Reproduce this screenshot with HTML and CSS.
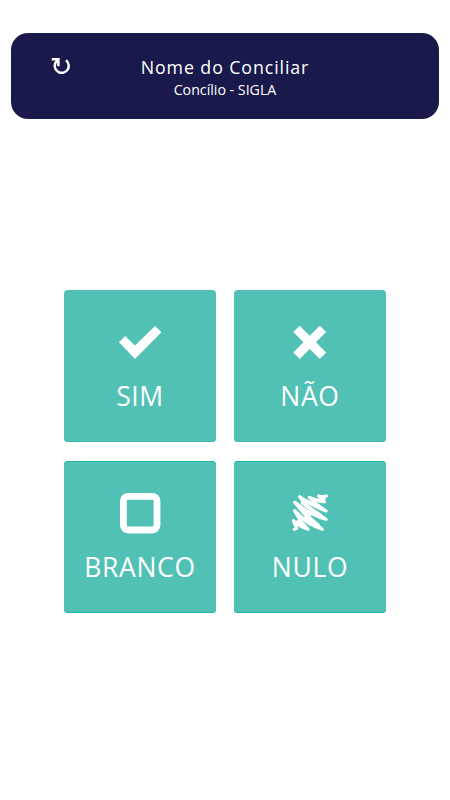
FILE: index.html
```html
<!DOCTYPE html>
<html lang="pt-BR">
<head>
<meta charset="utf-8">
<title>Votação</title>
<link rel="stylesheet" href="styles.css">
</head>
<body>
<header class="header">
  <svg class="reload" viewBox="0 0 20 20"><path d="M.8 2.2H7.4V9.2M15 3.3A7 7 0 1 1 4.2 6.3Q5.2 3.8 7.4 2.8"/></svg>
  <div class="person">
    <h1 class="name">Nome do Conciliar</h1>
    <p class="council">Concílio - SIGLA</p>
  </div>
</header>
<main class="votes">
  <button class="vote">
    <svg class="icon" viewBox="0 0 44 44"><path d="M1 22.3 7.2 16 17 25.6 37 6 43.4 12.3 17 39Z"/></svg>
    <span class="label">SIM</span>
  </button>
  <button class="vote">
    <svg class="icon" viewBox="0 0 44 44"><path d="M5.3 12 11.7 5.7 21.7 15.8 31.8 5.7 38.2 12 28 22.3 38.2 32.6 31.8 39 21.7 28.9 11.7 39 5.3 32.6 15.4 22.3Z"/></svg>
    <span class="label">NÃO</span>
  </button>
  <button class="vote vote-lower">
    <svg class="icon" viewBox="0 0 44 44"><rect class="box" x="5.4" y="5.4" width="33.6" height="33.6" rx="4.7"/></svg>
    <span class="label">BRANCO</span>
  </button>
  <button class="vote vote-lower">
    <svg class="icon" viewBox="0 3 132 132"><path class="scribble" d="M115 18Q103 22 92 18L110 36Q86 33 64 22L84 41 114 63Q72 48 35 20L58 50 114 88Q70 76 20 37L50 73 103 118Q62 106 20 62L36 90 60 118Q34 110 16 92L26 115 19 118"/><path class="scribble fill" d="M76 27 102 34M50 30 98 55M43 39 98 76M35 53 66 74M65 83 90 105M52 84 92 110M33 77 66 102M29 95 50 110M97 20 108 26"/></svg>
    <span class="label">NULO</span>
  </button>
</main>
</body>
</html>
```

FILE: styles.css
```css
* { box-sizing: border-box; }

body {
  margin: 0;
  padding: 33px 11px 0;
  height: 800px;
  background: #fff;
  font-family: "Open Sans", "Noto Sans", sans-serif;
  color: #fff;
}

.header {
  display: grid;
  grid-template-columns: 80px 1fr 80px;
  height: 86px;
  padding-top: 22px;
  background: #19194b;
  border-radius: 17px;
}

.reload {
  width: 20px;
  height: 20px;
  margin: 2px 0 0 40px;
  fill: none;
  stroke: #fff;
  stroke-width: 2.5;
}

.person { text-align: center; }

.name {
  margin: 0;
  font-size: 17.8px;
  line-height: 25px;
  font-weight: 400;
  letter-spacing: .9px;
}

.council {
  margin: 0;
  font-size: 14.2px;
  line-height: 20px;
}

.votes {
  display: grid;
  grid-template-columns: 152px 152px;
  grid-auto-rows: 152px;
  gap: 19px 18px;
  justify-content: center;
  margin-top: 171px;
}

.vote {
  display: flex;
  flex-direction: column;
  align-items: center;
  padding: 30px 0 0;
  border: 0;
  border-radius: 4px;
  background: #50c1b4;
  box-shadow: inset 0 -1px #3dbdae;
  color: #fff;
  font: inherit;
}

.vote-lower { box-shadow: inset 0 1px #22b7a5, inset 0 -1px #22b7a5; }

.icon {
  flex: none;
  width: 44px;
  height: 44px;
  fill: #fff;
}

.box {
  fill: none;
  stroke: #fff;
  stroke-width: 6.8;
}

.scribble {
  fill: none;
  stroke: #fff;
  stroke-width: 9.5;
  stroke-linecap: round;
  stroke-linejoin: round;
}

.fill { stroke-width: 10; }

.label {
  margin-top: 14px;
  font-size: 26.5px;
  line-height: 36px;
  letter-spacing: .65px;
}
```
